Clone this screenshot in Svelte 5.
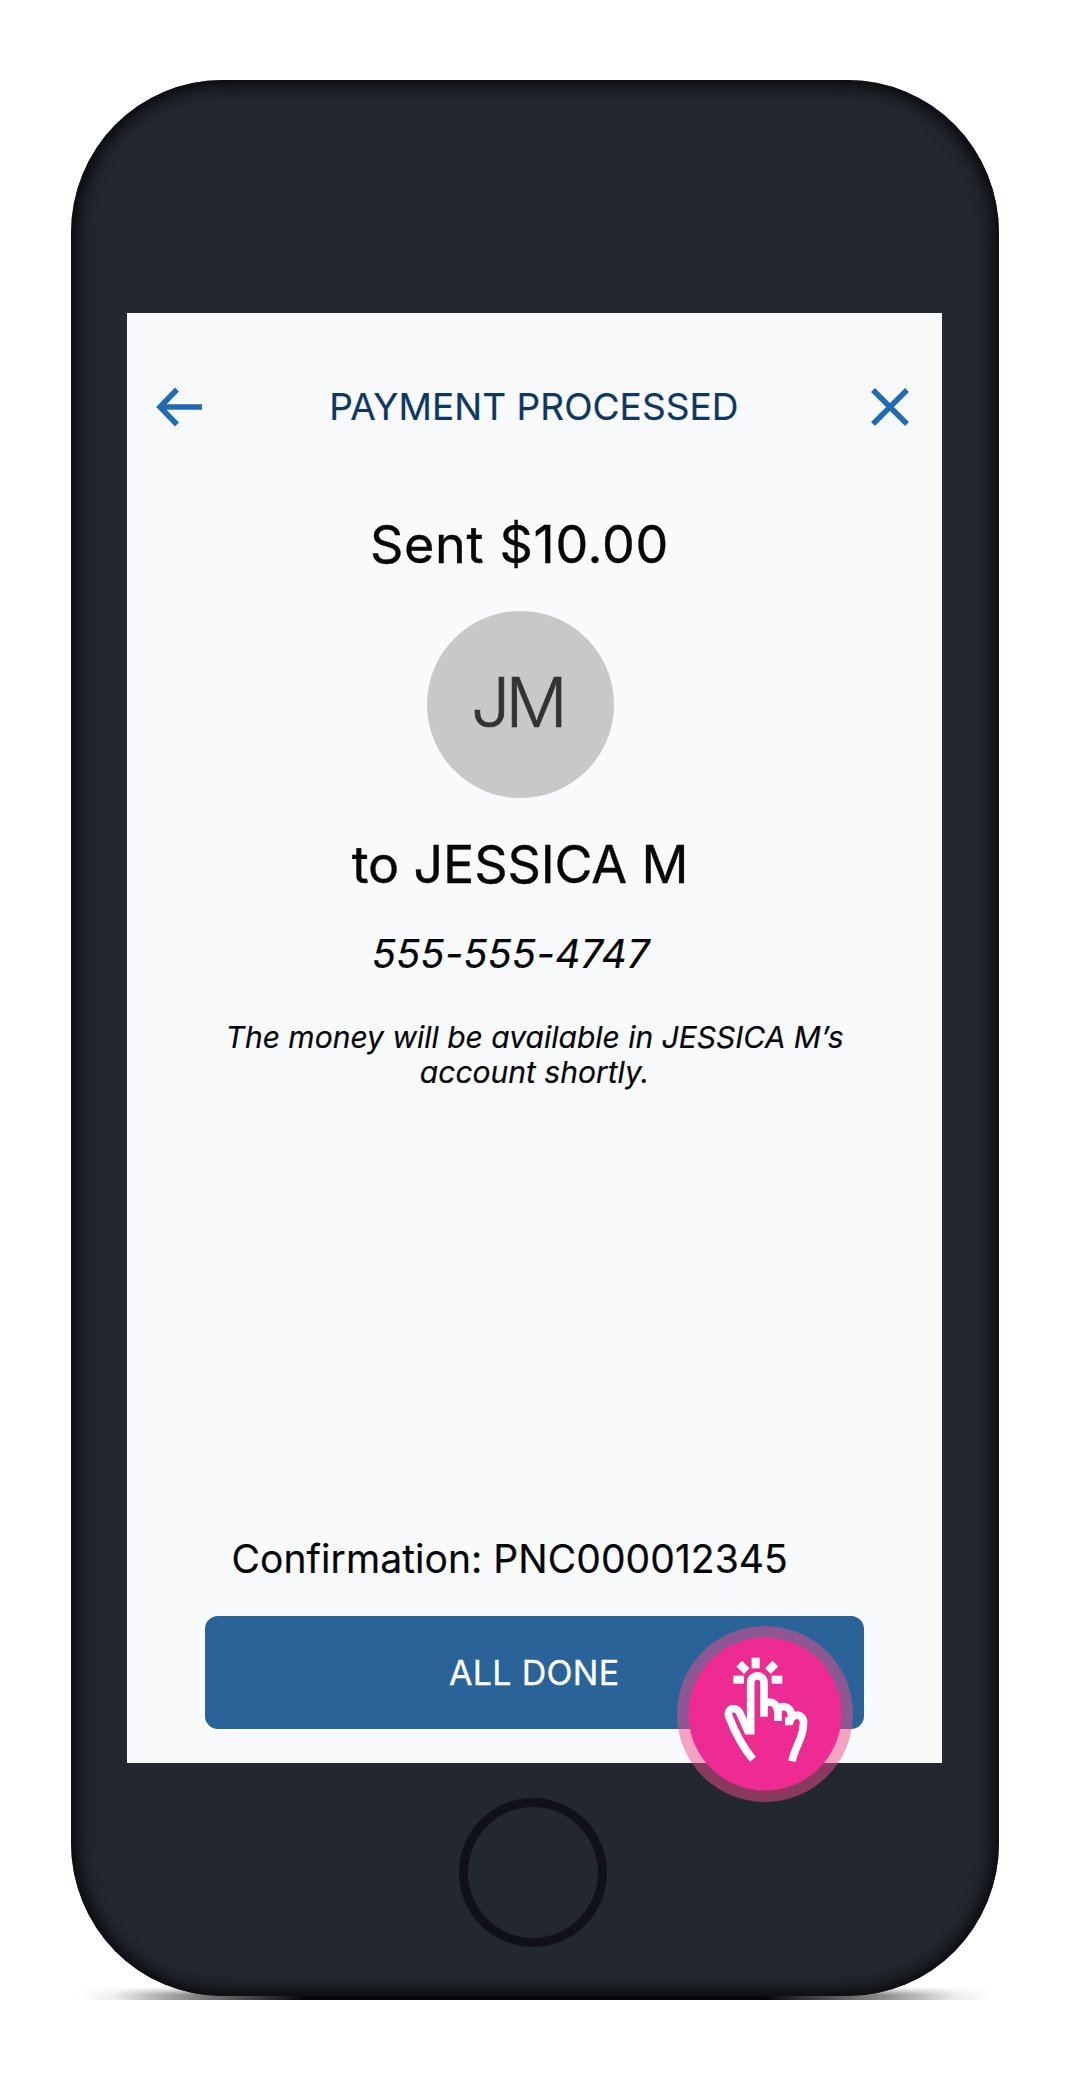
<script lang="ts">
  export let amount = '$10.00';
  export let recipient = 'JESSICA M';
  export let initials = 'JM';
  export let phone = '555-555-4747';
  export let confirmation = 'PNC000012345';

  const rays = [
    { x: 528, y: 429, angle: 90 },
    { x: 490, y: 442, angle: 45 },
    { x: 576, y: 442, angle: -45 },
    { x: 477, y: 479, angle: 0 },
    { x: 592, y: 479, angle: 0 },
  ];
</script>

<div class="stage">
  <div class="phone">
    <main class="screen">
      <header>
        <button class="icon" aria-label="Back">
          <svg width="47" height="40" viewBox="0 0 47 40">
            <path d="M21 2.5 4 20l17 17.5M4 20h42" />
          </svg>
        </button>
        <h1>PAYMENT PROCESSED</h1>
        <button class="icon" aria-label="Close">
          <svg width="40" height="40" viewBox="0 0 40 40">
            <path d="M3 3l34 34M37 3L3 37" />
          </svg>
        </button>
      </header>

      <section class="summary">
        <p class="sent">Sent {amount}</p>
        <div class="avatar"><span>{initials}</span></div>
        <p class="to">to {recipient}</p>
        <p class="number">{phone}</p>
        <p class="note">The money will be available in {recipient}’s<br />account shortly.</p>
      </section>

      <footer>
        <p class="confirmation">Confirmation: {confirmation}</p>
        <button class="done">
          <span>ALL DONE</span>
        </button>
      </footer>

      <div class="tap">
        <svg viewBox="292 318 528 528">
          {#each rays as ray}
            <rect x={ray.x - 16} y={ray.y - 12} width="32" height="24" transform="rotate({ray.angle} {ray.x} {ray.y})" />
          {/each}
          <path d="M520 718C488 680 464 632 447 588C441 562 472 560 480 578L504 632H513V488C513 461 553 461 553 488V590" />
          <path d="M556 549C580 540 595 556 595 578V603" />
          <path d="M598 564C622 550 645 575 631 604H616" />
          <path d="M637 592C658 576 676 594 671 616C670 655 645 682 637 724" />
        </svg>
      </div>
    </main>
    <div class="home"></div>
  </div>
</div>

<style>
  :global(body) {
    background: #fff;
  }
  .stage {
    position: relative;
    box-sizing: border-box;
    width: 1071px;
    height: 2078px;
    padding: 80px 0 0 70.5px;
    font-family: Inter, 'Liberation Sans', sans-serif;
    color: #050708;
  }
  /* floor shadow, cut flat at the bottom */
  .stage::before {
    content: '';
    position: absolute;
    left: 78px;
    top: 1987px;
    width: 914px;
    height: 13px;
    background: linear-gradient(90deg, transparent, rgba(10, 14, 14, 0.08) 4%, rgba(10, 14, 14, 0.38) 10%, #050606 25%, #050606 75%, rgba(10, 14, 14, 0.38) 90%, rgba(10, 14, 14, 0.08) 96%, transparent);
    mask-image: linear-gradient(#0000, #000 60%);
  }
  .phone {
    position: relative;
    box-sizing: border-box;
    display: flex;
    flex-direction: column;
    width: 928px;
    height: 1916px;
    padding: 233px 0 0 56.5px;
    border-radius: 151px / 153px;
    background: #23272f;
    box-shadow: inset 0 0 18px 5px #050607;
  }
  .screen {
    position: relative;
    display: flex;
    flex-direction: column;
    width: 815px;
    height: 1450px;
    background: #f9fafc;
  }
  p,
  h1 {
    margin: 0;
    font-weight: 400;
    white-space: nowrap;
    -webkit-text-stroke: 0.2px currentColor;
  }
  button {
    border: 0;
    padding: 0;
    font: inherit;
    background: none;
  }
  header {
    display: flex;
    align-items: center;
    justify-content: space-between;
    height: 60px;
    padding: 64px 31.5px 0 28.5px;
  }
  h1 {
    margin-right: 5px;
    color: #0f385f;
    font-size: 37px;
    line-height: 60px;
    letter-spacing: 0.07px;
  }
  .icon {
    display: flex;
  }
  .icon path {
    fill: none;
    stroke: #226bb2;
    stroke-width: 5.5;
  }
  .summary {
    display: flex;
    flex-direction: column;
    align-items: center;
    padding-top: 78px;
  }
  .sent,
  .to {
    margin-right: 29px;
    font-size: 52px;
    line-height: 60px;
    -webkit-text-stroke-width: 0.4px;
  }
  .sent {
    margin-right: 30px;
    letter-spacing: 0.7px;
  }
  .to {
    letter-spacing: -0.15px;
  }
  .avatar {
    display: flex;
    align-items: center;
    justify-content: center;
    box-sizing: border-box;
    width: 187px;
    height: 187px;
    margin: 36px 28px 37px 0;
    padding: 0 7px 6px 0;
    border-radius: 50%;
    background: #c8c8c8;
    color: #333;
    font-size: 69px;
    font-weight: 300;
    letter-spacing: -4.5px;
    -webkit-text-stroke: 0.7px #333;
  }
  .number {
    margin: 34px 47px 0 0;
    font-size: 39.5px;
    line-height: 50px;
    letter-spacing: 0.35px;
    font-style: italic;
  }
  .note {
    margin-top: 41px;
    text-align: center;
    font-size: 30px;
    line-height: 35px;
    font-style: italic;
  }
  footer {
    display: flex;
    flex-direction: column;
    margin-top: auto;
    padding: 0 78.5px 34px;
  }
  .confirmation {
    padding-left: 26px;
    font-size: 39px;
    line-height: 50px;
    letter-spacing: 0.06px;
  }
  .done {
    height: 113.5px;
    margin: 32px 0 0 -0.5px;
    border-radius: 13px;
    background: #2a6398;
    color: #fff;
    font-size: 34px;
    letter-spacing: 0.3px;
    -webkit-text-stroke: 0.3px #fff;
  }
  .tap {
    position: absolute;
    left: 550.3px;
    top: 1312.7px;
    box-sizing: border-box;
    width: 176px;
    height: 176px;
    border-radius: 50%;
    background: radial-gradient(circle, #ee2a93 76px, rgba(238, 76, 140, 0.5) 77px);
  }
  .tap svg {
    display: block;
  }
  .tap path {
    fill: none;
    stroke: #fff;
    stroke-width: 23;
  }
  .tap rect {
    fill: #fff;
  }
  .home {
    box-sizing: border-box;
    width: 148px;
    height: 149px;
    margin: 34.5px 0 0 332.3px;
    border: 9px solid #10111a;
    border-radius: 50%;
  }
</style>
